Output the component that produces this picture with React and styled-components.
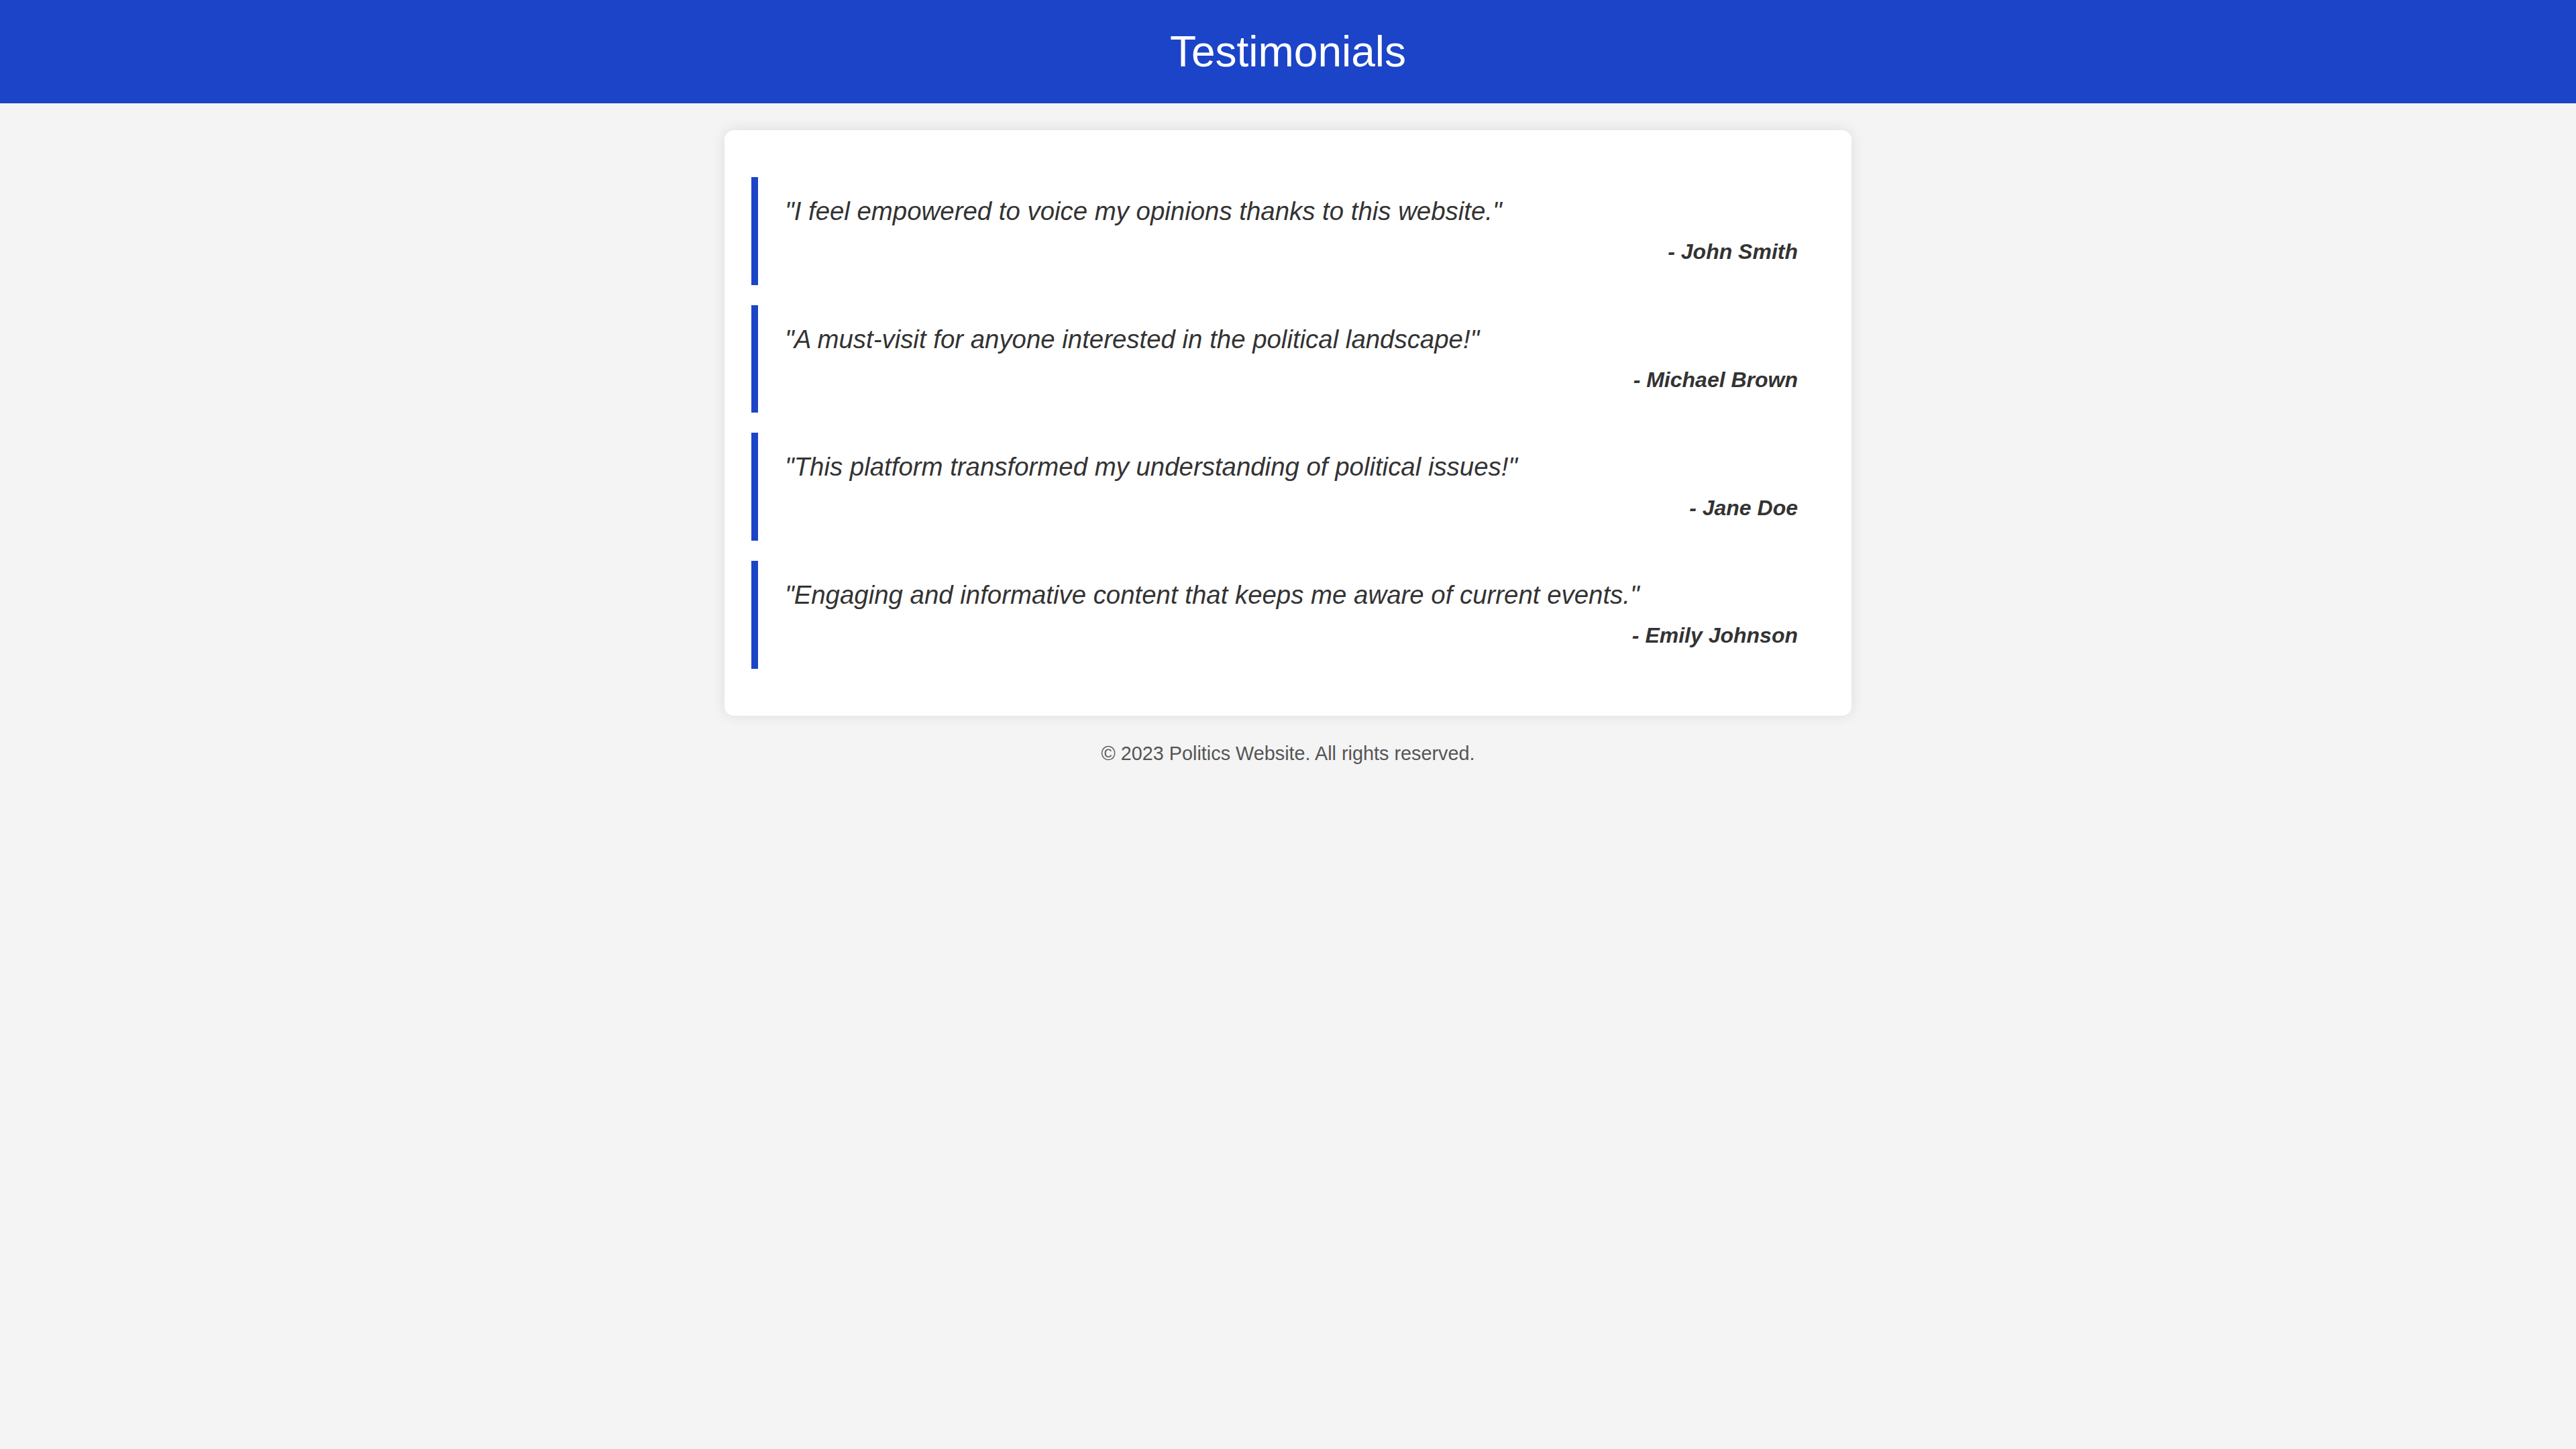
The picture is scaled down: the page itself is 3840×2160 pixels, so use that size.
import React from 'react'
import styled, { createGlobalStyle } from 'styled-components'

const GlobalStyle = createGlobalStyle`
  body {
    margin: 0;
    font-family: "Liberation Sans", Arial, sans-serif;
    font-size: 32px;
    line-height: 1.6;
    background: #f4f4f4;
    color: #333;
  }
`

const Header = styled.header`
  background: #1c44c8;
  color: white;
  padding: 40px;
  text-align: center;
`

const Title = styled.h1`
  margin: 0;
  font-size: 64px;
  font-weight: normal;
  line-height: 74px;
`

const Card = styled.main`
  max-width: 1600px;
  margin: 40px auto 0;
  padding: 40px;
  background: white;
  border-radius: 14px;
  box-shadow: 0 0 20px rgba(0, 0, 0, 0.1);
`

const Quote = styled.blockquote`
  margin: 30px 0;
  padding: 20px 40px 23px;
  border-left: 10px solid #1c44c8;
  display: flex;
  flex-direction: column;
`

const QuoteText = styled.p`
  margin: 0;
  font-size: 38.4px;
  font-style: italic;
`

const Author = styled.cite`
  margin-top: 5px;
  text-align: right;
  font-weight: bold;
  font-style: italic;
`

const Footer = styled.footer`
  text-align: center;
  padding: 33px 0;
  font-size: 28.8px;
  color: #555;
`

const testimonials = [
  { text: '"I feel empowered to voice my opinions thanks to this website."', author: 'John Smith' },
  { text: '"A must-visit for anyone interested in the political landscape!"', author: 'Michael Brown' },
  { text: '"This platform transformed my understanding of political issues!"', author: 'Jane Doe' },
  { text: '"Engaging and informative content that keeps me aware of current events."', author: 'Emily Johnson' },
]

export default function App() {
  return (
    <>
      <GlobalStyle />
      <Header>
        <Title>Testimonials</Title>
      </Header>
      <Card>
        {testimonials.map(t => (
          <Quote key={t.author}>
            <QuoteText>{t.text}</QuoteText>
            <Author>- {t.author}</Author>
          </Quote>
        ))}
      </Card>
      <Footer>© 2023 Politics Website. All rights reserved.</Footer>
    </>
  )
}
